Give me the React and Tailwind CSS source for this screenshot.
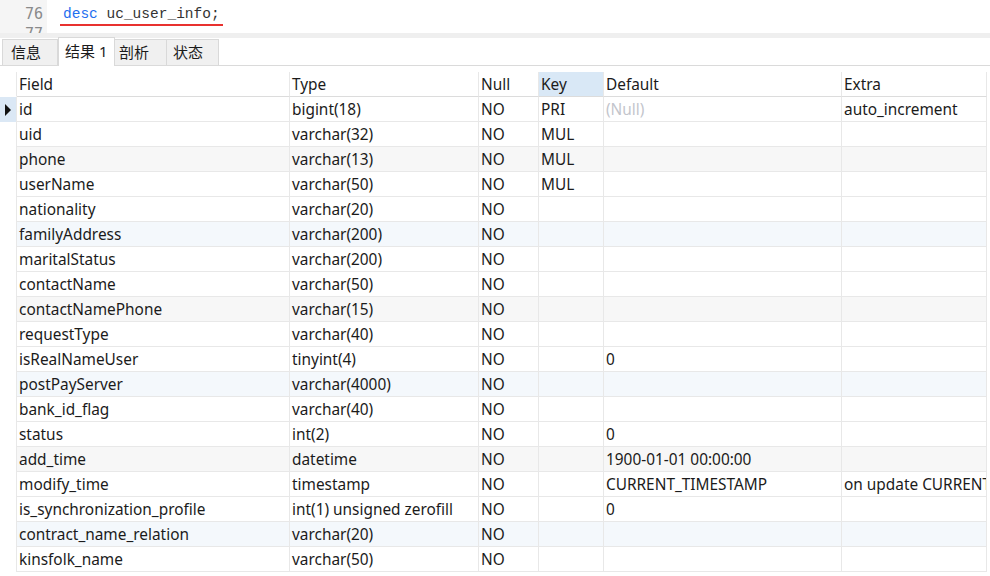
import React from "react";

const rows = [
  ["id", "bigint(18)", "NO", "PRI", "(Null)", "auto_increment"],
  ["uid", "varchar(32)", "NO", "MUL", "", ""],
  ["phone", "varchar(13)", "NO", "MUL", "", ""],
  ["userName", "varchar(50)", "NO", "MUL", "", ""],
  ["nationality", "varchar(20)", "NO", "", "", ""],
  ["familyAddress", "varchar(200)", "NO", "", "", ""],
  ["maritalStatus", "varchar(200)", "NO", "", "", ""],
  ["contactName", "varchar(50)", "NO", "", "", ""],
  ["contactNamePhone", "varchar(15)", "NO", "", "", ""],
  ["requestType", "varchar(40)", "NO", "", "", ""],
  ["isRealNameUser", "tinyint(4)", "NO", "", "0", ""],
  ["postPayServer", "varchar(4000)", "NO", "", "", ""],
  ["bank_id_flag", "varchar(40)", "NO", "", "", ""],
  ["status", "int(2)", "NO", "", "0", ""],
  ["add_time", "datetime", "NO", "", "1900-01-01 00:00:00", ""],
  ["modify_time", "timestamp", "NO", "", "CURRENT_TIMESTAMP", "on update CURRENT_TIMESTAMP"],
  ["is_synchronization_profile", "int(1) unsigned zerofill", "NO", "", "0", ""],
  ["contract_name_relation", "varchar(20)", "NO", "", "", ""],
  ["kinsfolk_name", "varchar(50)", "NO", "", "", ""],
];

const headers = ["Field", "Type", "Null", "Key", "Default", "Extra"];

function rowBg(i) {
  if (i % 6 === 2) return "bg-[#f7f7f7]";
  if (i % 6 === 5) return "bg-[#f4f8fc]";
  return "bg-white";
}

const cell =
  "h-[25px] border-r border-b border-[#e8e8e8] pl-[2px] leading-[26px] whitespace-nowrap overflow-hidden";

export default function App() {
  return (
    <div
      className="w-[990px] h-[576px] overflow-hidden bg-white text-[#1b1b1b]"
      style={{ fontFamily: '"Noto Sans", "Noto Sans CJK SC", sans-serif' }}
    >
      {/* Editor */}
      <div className="flex h-[33px] overflow-hidden">
        <div
          className="w-[47px] bg-[#f5f5f5] text-[#8a8a8a] text-right pr-[4px] pt-[4px] text-[15px] leading-[20px]"
          style={{ fontFamily: '"DejaVu Sans Mono", monospace' }}
        >
          <div>76</div>
          <div>77</div>
        </div>
        <div
          className="pl-[13px] pt-[4px] text-[14.5px] leading-[20px]"
          style={{ fontFamily: '"Liberation Mono", monospace' }}
        >
          <span className="inline-block px-[3px] border-b-2 border-[#e8312f]">
            <span className="text-[#1f6fef]">desc</span>{" "}
            <span className="text-[#333]">uc_user_info;</span>
          </span>
        </div>
      </div>
      <div className="h-[5px] bg-[#efefef]" />

      {/* Tabs */}
      <div className="flex items-end h-[28px] border-b border-[#dadada] pl-[2px] text-[15px]">
        <div className="w-[56px] h-[26px] bg-[#f0f0f0] border border-b-0 border-[#d9d9d9] pl-[8px] leading-[24px]">
          信息
        </div>
        <div className="w-[57px] h-[29px] -mb-px bg-white border border-b-0 border-[#d9d9d9] pl-[6px] leading-[26px]">
          结果 1
        </div>
        <div className="w-[52px] h-[26px] bg-[#f0f0f0] border border-l-0 border-b-0 border-[#d9d9d9] pl-[4px] leading-[24px]">
          剖析
        </div>
        <div className="w-[52px] h-[26px] bg-[#f0f0f0] border border-l-0 border-b-0 border-[#d9d9d9] pl-[6px] leading-[24px]">
          状态
        </div>
      </div>

      {/* Table */}
      <div className="pt-[6px] text-[15.4px]">
        <div className="grid grid-cols-[17px_273px_189px_60px_65px_238px_145px]">
          <div className="h-[25px] border-r border-b border-[#e8e8e8] border-b-white" />
          {headers.map((h) => (
            <div
              key={h}
              className={`${cell} border-b-[#dcdcdc] ${h === "Key" ? "bg-[#d9e8f6]" : "bg-white"}`}
            >
              {h}
            </div>
          ))}
          {rows.map((r, i) => (
            <React.Fragment key={r[0]}>
              <div
                className={`h-[25px] border-r border-[#e8e8e8] flex items-center pl-[4px] ${
                  i === 0 ? "bg-[#dbe8f5]" : "bg-white"
                }`}
              >
                {i === 0 && (
                  <svg width="8" height="12" viewBox="0 0 8 12">
                    <path d="M1 0 L7 6 L1 12 Z" fill="#111" />
                  </svg>
                )}
              </div>
              {r.map((v, j) => (
                <div
                  key={j}
                  className={`${cell} ${rowBg(i)} ${
                    v === "(Null)" ? "text-[#c3c5cc]" : ""
                  }`}
                >
                  {v}
                </div>
              ))}
            </React.Fragment>
          ))}
        </div>
      </div>
    </div>
  );
}
